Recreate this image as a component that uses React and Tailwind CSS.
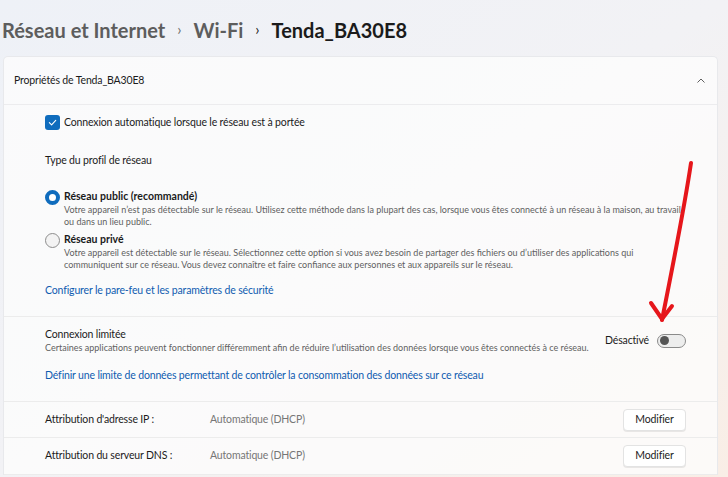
import React from "react";

const font = { fontFamily: 'Lato, "Noto Sans", sans-serif' };

function Checkbox() {
  return (
    <span className="flex h-[15px] w-[15px] items-center justify-center rounded-[3px] bg-[#0f6cbd]">
      <svg width="9" height="9" viewBox="0 0 10 10">
        <path d="M1.5 5.2 L4 7.6 L8.6 2.6" fill="none" stroke="#fff" strokeWidth="1.2" strokeLinecap="round" strokeLinejoin="round" />
      </svg>
    </span>
  );
}

function Radio({ checked }) {
  return checked ? (
    <span className="mt-px h-[15px] w-[15px] shrink-0 rounded-full border-[4px] border-[#0f6cbd] bg-white" />
  ) : (
    <span className="mt-px h-[15px] w-[15px] shrink-0 rounded-full border border-[#8d8d8d] bg-[#f3f3f3]" />
  );
}

function RadioOption({ checked, title, lines }) {
  return (
    <div className="flex gap-[4px]">
      <Radio checked={checked} />
      <div>
        <div className="h-[15px] text-[10.5px] leading-[15px] font-bold text-[#1b1b1b]">{title}</div>
        {lines.map((l) => (
          <div key={l} className="h-[12px] whitespace-nowrap text-[9px] leading-[12px] text-[#5f5f5f]">{l}</div>
        ))}
      </div>
    </div>
  );
}

function Row({ label, value, last }) {
  return (
    <div className={`flex items-center pl-[41px] pr-[31px] ${last ? "h-[37px] border-b" : "h-[36px] border-b"} border-[#ececec] text-[10.5px] tracking-[-0.15px]`}>
      <div className="w-[165px] text-[#1b1b1b]">{label}</div>
      <div className="flex-1 text-[#767676]">{value}</div>
      <button className="h-[22px] w-[63px] rounded-[4px] border border-[#e3e3e3] bg-white text-[#1b1b1b] shadow-[0_1px_0_rgba(0,0,0,0.08)]">
        Modifier
      </button>
    </div>
  );
}

export default function App() {
  return (
    <div
      className="relative h-[477px] w-[728px] overflow-hidden bg-gradient-to-br from-[#eef1f7] via-[#f2f2f5] to-[#f9eee6]"
      style={font}
    >
      <div className="flex h-[56px] items-center gap-[12px] pt-[3px] pl-[2px] text-[20px] font-bold">
        <span className="text-[#5d5d5d]">Réseau et Internet</span>
        <span className="text-[15px] font-normal text-[#6b6b6b]">›</span>
        <span className="text-[#5d5d5d]">Wi-Fi</span>
        <span className="text-[15px] font-normal text-[#1b1b1b]">›</span>
        <span className="text-[#1b1b1b]">Tenda_BA30E8</span>
      </div>

      <div className="ml-[3px] w-[715px] rounded-t-[5px] border border-b-0 border-[#e8e9ec] bg-[#fdfdfd]/80 text-[10.5px] tracking-[-0.15px]">
        <div className="flex h-[48px] items-center justify-between border-b border-[#ececee] pl-[10px] pr-[11px] pt-px">
          <span className="text-[#1b1b1b]">Propriétés de Tenda_BA30E8</span>
          <svg width="10" height="10" viewBox="0 0 10 10">
            <path d="M1.5 6.5 L5 3 L8.5 6.5" fill="none" stroke="#5f5f5f" strokeWidth="1" />
          </svg>
        </div>

        <div className="border-b border-[#ececec] pb-[18px] pl-[41px] pr-[31px] pt-[10px]">
          <label className="flex h-[15px] items-center gap-[4px]">
            <Checkbox />
            <span className="text-[#1b1b1b]">Connexion automatique lorsque le réseau est à portée</span>
          </label>
          <div className="mt-[23px] h-[15px] leading-[15px] text-[#1b1b1b]">Type du profil de réseau</div>
          <div className="mt-[21px] tracking-normal">
            <RadioOption
              checked
              title="Réseau public (recommandé)"
              lines={[
                "Votre appareil n’est pas détectable sur le réseau. Utilisez cette méthode dans la plupart des cas, lorsque vous êtes connecté à un réseau à la maison, au travail,",
                "ou dans un lieu public.",
              ]}
            />
          </div>
          <div className="mt-[4px] tracking-normal">
            <RadioOption
              title="Réseau privé"
              lines={[
                "Votre appareil est détectable sur le réseau. Sélectionnez cette option si vous avez besoin de partager des fichiers ou d’utiliser des applications qui",
                "communiquent sur ce réseau. Vous devez connaître et faire confiance aux personnes et aux appareils sur le réseau.",
              ]}
            />
          </div>
          <div className="mt-[12px] h-[15px] leading-[15px] text-[#0f5bb0]">
            Configurer le pare-feu et les paramètres de sécurité
          </div>
        </div>

        <div className="border-b border-[#ececec] pb-[18px] pl-[41px] pr-[31px] pt-[10px]">
          <div className="flex items-center justify-between">
            <div>
              <div className="h-[15px] leading-[15px] text-[#1b1b1b]">Connexion limitée</div>
              <div className="h-[12px] whitespace-nowrap text-[9px] leading-[12px] tracking-normal text-[#5f5f5f]">
                Certaines applications peuvent fonctionner différemment afin de réduire l’utilisation des données lorsque vous êtes connectés à ce réseau.
              </div>
            </div>
            <div className="flex items-center gap-[8px]">
              <span className="text-[#1b1b1b]">Désactivé</span>
              <span className="flex h-[14px] w-[29px] items-center rounded-full border border-[#8a8a8a] bg-[#ededed] pl-[2px]">
                <span className="h-[9px] w-[9px] rounded-full bg-[#555]" />
              </span>
            </div>
          </div>
          <div className="mt-[14px] h-[15px] leading-[15px] text-[#0f5bb0]">
            Définir une limite de données permettant de contrôler la consommation des données sur ce réseau
          </div>
        </div>

        <Row label="Attribution d'adresse IP :" value="Automatique (DHCP)" />
        <Row label="Attribution du serveur DNS :" value="Automatique (DHCP)" last />
      </div>

      <svg className="pointer-events-none absolute left-0 top-0" width="728" height="477">
        <g fill="none" stroke="#e6161b" strokeWidth="4" strokeLinecap="round" strokeLinejoin="round">
          <path d="M691 163 C684 210, 672 270, 662 320" />
          <path d="M651 303 L662 319 L672 306" />
        </g>
      </svg>
    </div>
  );
}
